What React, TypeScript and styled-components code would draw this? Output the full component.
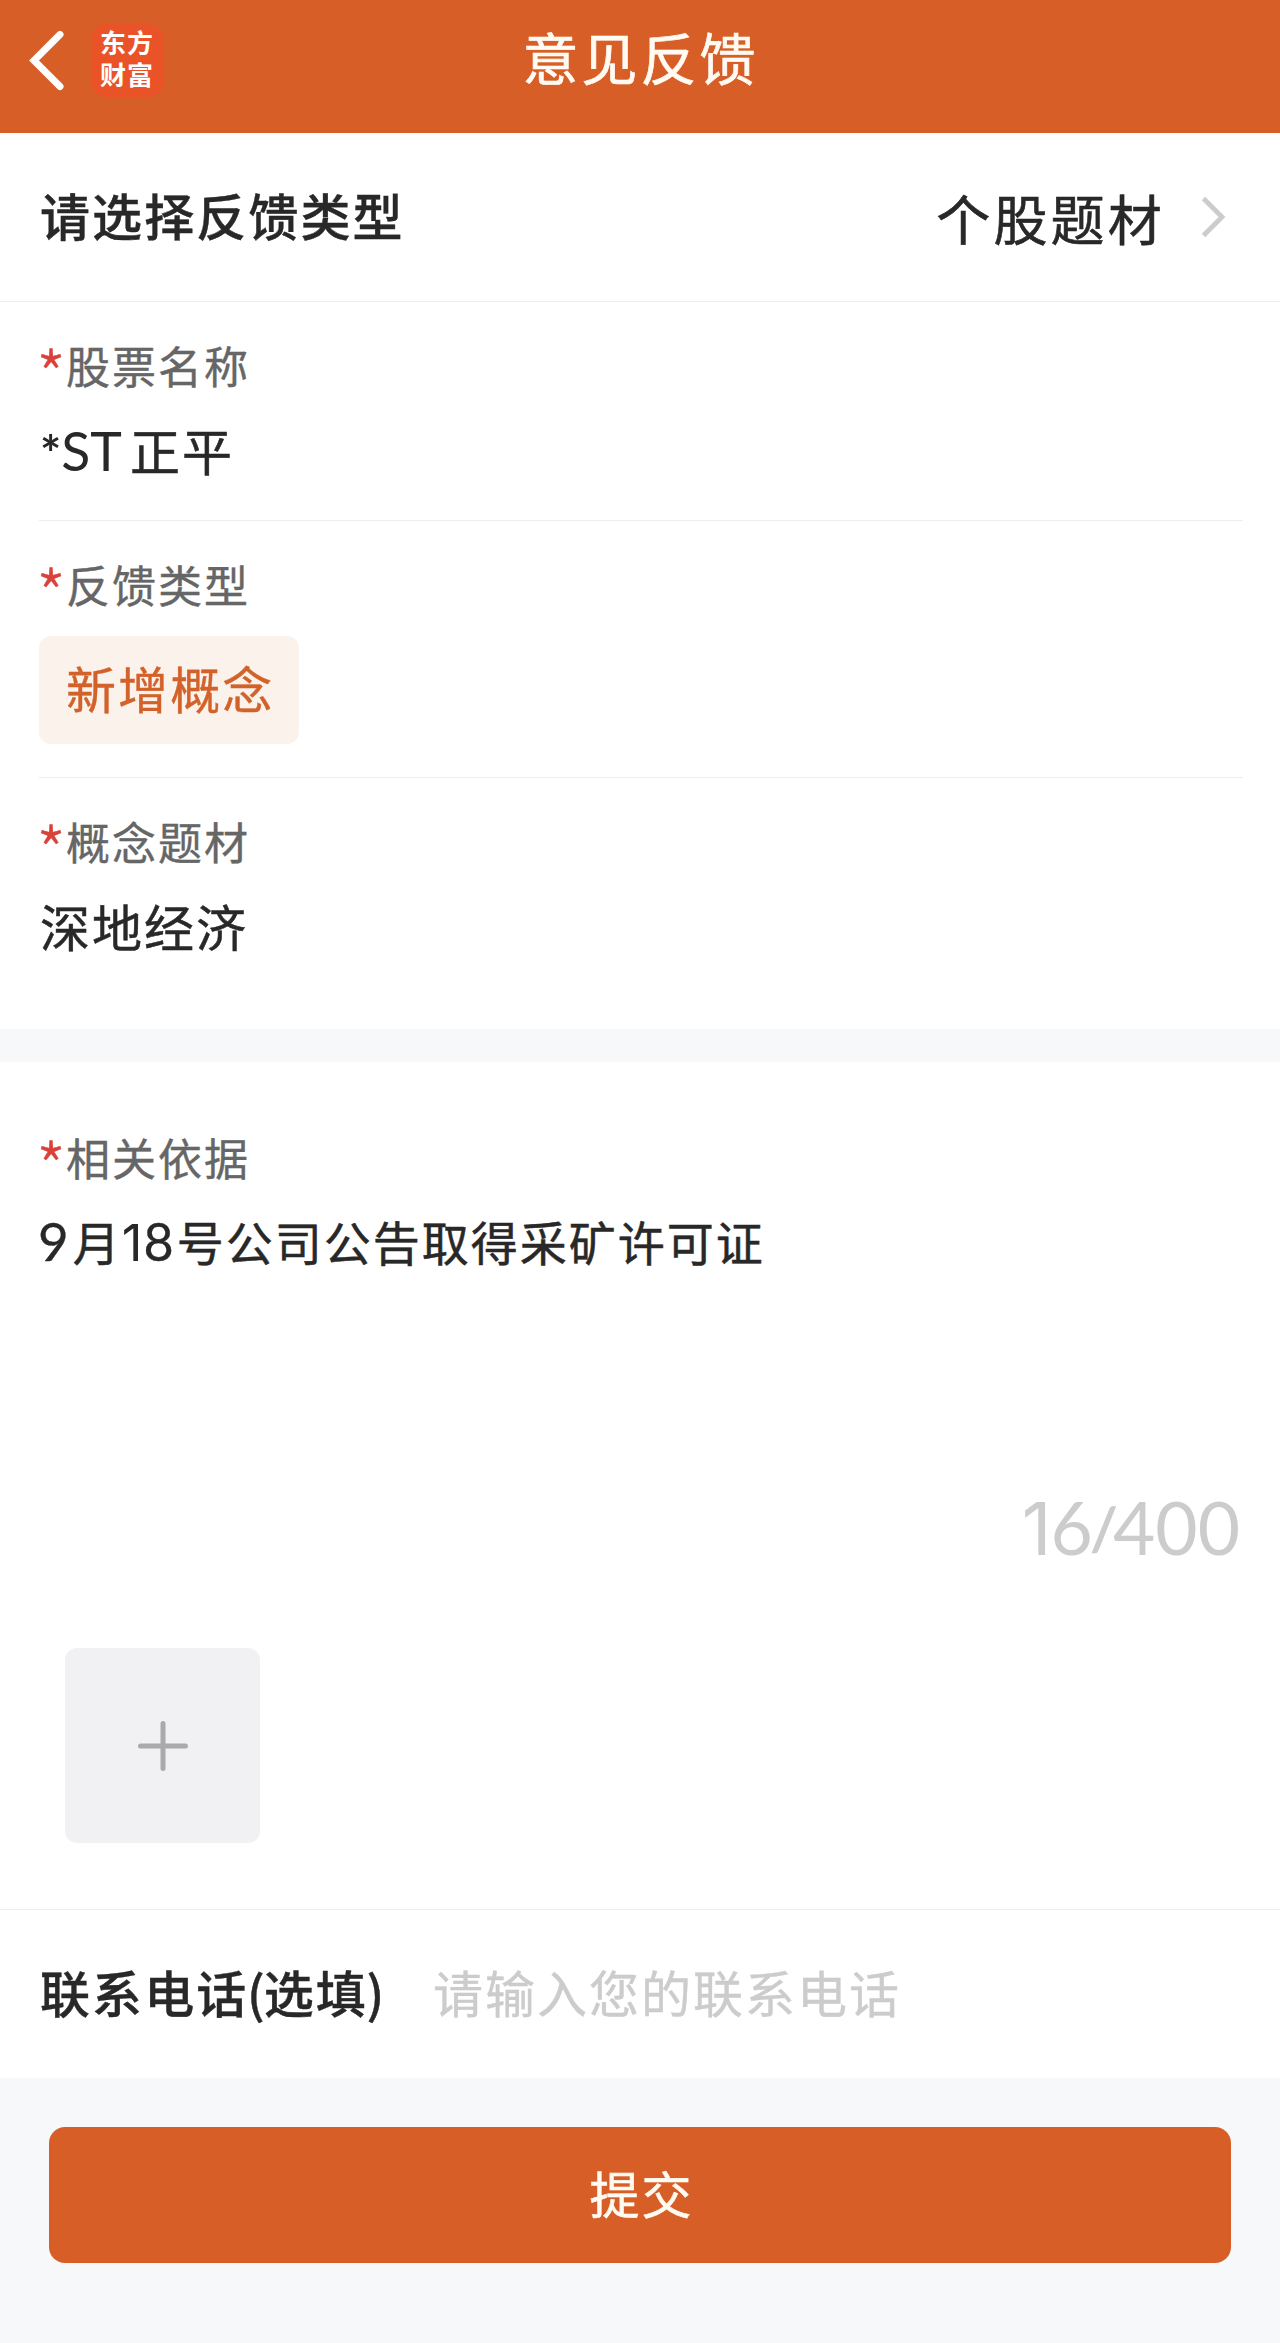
import React from "react";
import styled, { createGlobalStyle } from "styled-components";

const brand = "#d75e27";
const ink = "#282828";

const GlobalStyle = createGlobalStyle`
  *, *::before, *::after { box-sizing: border-box; }
  body {
    margin: 0;
    background: #f7f8fa;
    font-family: "Noto Sans CJK SC", "Noto Sans", sans-serif;
    color: ${ink};
  }
  button, input, textarea { font: inherit; border: 0; padding: 0; margin: 0; }
`;

const Page = styled.main`
  width: 1280px;
  height: 2343px;
  display: flex;
  flex-direction: column;
  background: #f7f8fa;
  overflow: hidden;
  white-space: nowrap;
`;

const Header = styled.header`
  height: 133px;
  padding: 24px 29px 0;
  display: grid;
  grid-template-columns: 300px 1fr 300px;
  align-items: start;
  background: ${brand};
  color: #fffaf2;
`;

const HeaderLeft = styled.div`
  display: flex;
  align-items: center;
  gap: 27px;
  height: 73px;
`;

const Logo = styled.div`
  width: 73px;
  height: 73px;
  padding: 2px 8px 0 9px;
  border-radius: 16px;
  background: #ea5328;
  color: #fff;
  font-size: 26px;
  line-height: 32px;
  font-weight: 700;
  letter-spacing: 1px;
  white-space: normal;
`;

const Title = styled.h1`
  margin: 0;
  padding-left: 1px;
  text-align: center;
  font-size: 56px;
  font-weight: 400;
  line-height: 64px;
  letter-spacing: 3px;
  -webkit-text-stroke: 0.7px currentColor;
`;

const TypeRow = styled.section`
  height: 169px;
  padding: 0 53px 0 40px;
  display: flex;
  align-items: center;
  justify-content: space-between;
  background: #fff;
  border-bottom: 1px solid #eee;
`;

const BoldLabel = styled.span`
  padding-bottom: 6px;
  font-size: 50px;
  line-height: 70px;
  font-weight: 500;
  letter-spacing: 2.1px;
  -webkit-text-stroke: 0.4px currentColor;
`;

const Picked = styled.div`
  display: flex;
  align-items: center;
  gap: 36px;
`;

const PickedText = styled.span`
  font-size: 54px;
  line-height: 70px;
  letter-spacing: 3.2px;
  padding-top: 2px;
  -webkit-text-stroke: 0.6px currentColor;
`;

const Panel = styled.section<{ $height: number }>`
  height: ${(p) => p.$height}px;
  padding: 0 37px 0 39px;
  background: #fff;
`;

const Field = styled.div<{ $height: number; $line?: boolean }>`
  height: ${(p) => p.$height}px;
  padding-top: 32px;
  border-bottom: ${(p) => (p.$line ? "1px solid #eee" : "0")};
`;

const FieldLabel = styled.div`
  display: flex;
  height: 62px;
  font-size: 44px;
  line-height: 62px;
  letter-spacing: 2px;
  color: #666;
  -webkit-text-stroke: 0.4px currentColor;
`;

const Star = styled.span`
  width: 30px;
  margin-left: -3px;
  color: #d8423a;
  font-size: 68px;
  font-weight: 300;
  line-height: 78px;
  letter-spacing: 0;
`;

const Value = styled.div<{ $size?: number; $top?: number }>`
  margin-top: ${(p) => p.$top ?? 18}px;
  padding-left: 1px;
  height: 70px;
  font-size: ${(p) => p.$size ?? 50}px;
  line-height: 70px;
  letter-spacing: 2px;
  -webkit-text-stroke: 0.5px currentColor;
`;

const Latin = styled.span<{
  $size: number;
  $gap?: number;
  $lead?: number;
  $face?: string;
  $weight?: number;
  $raise?: number;
  $stroke?: number;
}>`
  font-family: ${(p) => p.$face ?? "Lato"}, sans-serif;
  font-size: ${(p) => p.$size}px;
  font-weight: ${(p) => p.$weight ?? 400};
  line-height: 0;
  letter-spacing: 0;
  vertical-align: ${(p) => p.$raise ?? 0}px;
  margin-left: ${(p) => p.$lead ?? 0}px;
  margin-right: ${(p) => p.$gap ?? 0}px;
  -webkit-text-stroke: ${(p) => p.$stroke ?? 0}px currentColor;
`;

const Tag = styled.button`
  display: block;
  margin-top: 21px;
  width: 260px;
  height: 108px;
  padding: 0 0 6px 27px;
  border-radius: 12px;
  background: #fbf2ec;
  color: #d2622a;
  font-size: 50px;
  line-height: 97px;
  letter-spacing: 2.1px;
  text-align: left;
  -webkit-text-stroke: 0.4px currentColor;
`;

const Band = styled.div`
  height: 33px;
`;

const Evidence = styled(Panel)`
  padding-top: 32px;
  border-bottom: 1px solid #eee;
`;

const Counter = styled.div`
  margin-top: 122px;
  padding-right: 3px;
  height: 100px;
  text-align: right;
  line-height: 100px;
  color: #ccc;
`;

const Upload = styled.button`
  display: flex;
  align-items: center;
  justify-content: center;
  margin: 50px 0 0 26px;
  width: 195px;
  height: 195px;
  border-radius: 12px;
  background: #f1f1f4;
`;

const ContactRow = styled.section`
  height: 168px;
  padding: 0 40px;
  display: flex;
  align-items: center;
  background: #fff;
`;

const ContactLabel = styled(BoldLabel)`
  width: 393px;
`;

const Paren = styled.span`
  letter-spacing: -1px;
  margin-left: -1.5px;
`;

const PhoneInput = styled.input`
  flex: 1;
  height: 80px;
  padding-bottom: 7px;
  background: transparent;
  outline: none;
  font-size: 50px;
  letter-spacing: 2px;
  color: ${ink};
  -webkit-text-stroke: 0.4px currentColor;
  &::placeholder { color: #ccc; opacity: 1; }
`;

const Submit = styled.button`
  margin: 49px 49px 0;
  height: 136px;
  padding: 0 0 7px 3px;
  border-radius: 16px;
  background: ${brand};
  color: #fffaf2;
  font-size: 50px;
  line-height: 126px;
  letter-spacing: 2px;
  -webkit-text-stroke: 0.6px currentColor;
`;

function RequiredLabel({ children }: { children: React.ReactNode }) {
  return (
    <FieldLabel>
      <Star>*</Star>
      {children}
    </FieldLabel>
  );
}

export default function App() {
  return (
    <>
      <GlobalStyle />
      <Page>
        <Header>
          <HeaderLeft>
            <svg width="35" height="60" viewBox="0 0 35 60" fill="none" stroke="#fff" strokeWidth="7" strokeLinecap="round" strokeLinejoin="miter">
              <path d="M31 3.5 L5 29.5 L31 55.5" />
            </svg>
            <Logo>东方财富</Logo>
          </HeaderLeft>
          <Title>意见反馈</Title>
        </Header>

        <TypeRow>
          <BoldLabel>请选择反馈类型</BoldLabel>
          <Picked>
            <PickedText>个股题材</PickedText>
            <svg width="26" height="42" viewBox="0 0 26 42" fill="none" stroke="#ccc" strokeWidth="4.8">
              <path d="M2.5 2.5 L21 21 L2.5 39.5" />
            </svg>
          </Picked>
        </TypeRow>

        <Panel $height={727}>
          <Field $height={219} $line>
            <RequiredLabel>股票名称</RequiredLabel>
            <Value>
              <Latin $size={50} $weight={700} $raise={-1}>*</Latin>
              <Latin $size={53.5} $gap={8}>ST</Latin>正平
            </Value>
          </Field>
          <Field $height={257} $line>
            <RequiredLabel>反馈类型</RequiredLabel>
            <Tag>新增概念</Tag>
          </Field>
          <Field $height={251}>
            <RequiredLabel>概念题材</RequiredLabel>
            <Value>深地经济</Value>
          </Field>
        </Panel>

        <Band />

        <Evidence $height={848}>
          <Field $height={282}>
            <RequiredLabel>相关依据</RequiredLabel>
            <Value $size={47}>
              <Latin $size={53} $lead={-2} $gap={4} $stroke={0.3}>9</Latin>月
              <Latin $size={51} $lead={0} $gap={1} $face="Inter">1</Latin>
              <Latin $size={52} $gap={3} $stroke={0.3}>8</Latin>号公司公告取得采矿许可证
            </Value>
          </Field>
          <Counter>
            <Latin $size={73} $gap={-1} $face="Inter">1</Latin>
            <Latin $size={73}>6</Latin>
            <Latin $size={58} $lead={-2} $gap={-4} $raise={5} $stroke={1.5}>/</Latin>
            <Latin $size={73}>400</Latin>
          </Counter>
          <Upload aria-label="+">
            <svg width="50" height="50" viewBox="0 0 50 50" stroke="#aaa" strokeWidth="5" strokeLinecap="round">
              <path d="M25 2.5 V47.5 M2.5 25 H47.5" />
            </svg>
          </Upload>
        </Evidence>

        <ContactRow>
          <ContactLabel>
            联系电话<Paren>(</Paren>选填<Paren>)</Paren>
          </ContactLabel>
          <PhoneInput placeholder="请输入您的联系电话" />
        </ContactRow>

        <Submit>提交</Submit>
      </Page>
    </>
  );
}
